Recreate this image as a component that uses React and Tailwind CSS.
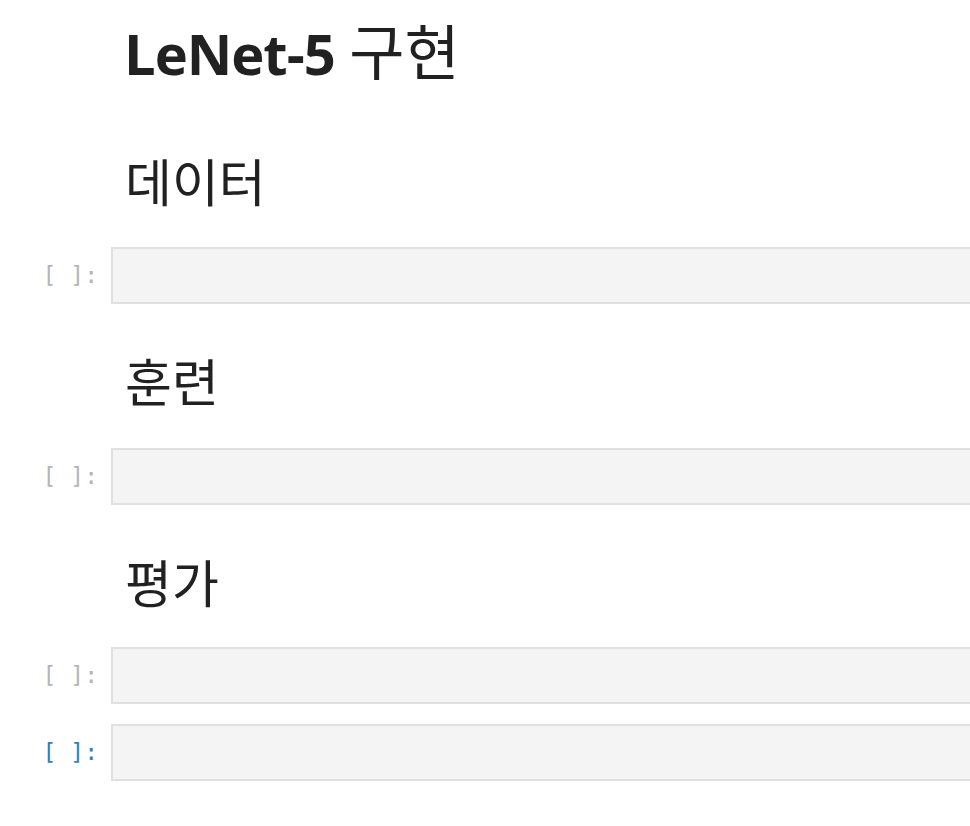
const Prompt = ({ active }) => (
  <div
    className={`w-[111px] shrink-0 pr-[13px] text-right text-[23px] leading-none ${active ? 'text-[#307fc1]' : 'text-[#b5b5b5]'}`}
    style={{ fontFamily: '"DejaVu Sans Mono", "Liberation Mono", monospace' }}
  >
    [&nbsp;]:
  </div>
);

const CodeCell = ({ active }) => (
  <div className="flex items-center">
    <Prompt active={active} />
    <div className="h-[57px] flex-1 -mr-[20px] border-2 border-[#e0e0e0] bg-[#f4f4f4]" />
  </div>
);

const Heading2 = ({ children }) => (
  <div className="pl-[125px] text-[51px] leading-none text-[#212121]">{children}</div>
);

export default function App() {
  return (
    <div
      className="min-h-screen w-[970px] overflow-hidden bg-white"
      style={{ fontFamily: '"Open Sans", "Noto Sans CJK KR", sans-serif' }}
    >
      <div className="h-[80px] pl-[124px] pt-[22px] text-[56px] font-bold leading-none text-[#212121]">
        <span className="tracking-[-1px]">LeNet-5</span>{' '}
        <span className="text-[60px] font-normal">구현</span>
      </div>

      <div className="mt-[77px]">
        <Heading2>데이터</Heading2>
      </div>
      <div className="mt-[39px]">
        <CodeCell />
      </div>

      <div className="mt-[53px]">
        <Heading2>훈련</Heading2>
      </div>
      <div className="mt-[40px]">
        <CodeCell />
      </div>

      <div className="mt-[53px]">
        <Heading2>평가</Heading2>
      </div>
      <div className="mt-[38px]">
        <CodeCell />
      </div>
      <div className="mt-[20px]">
        <CodeCell active />
      </div>
    </div>
  );
}
